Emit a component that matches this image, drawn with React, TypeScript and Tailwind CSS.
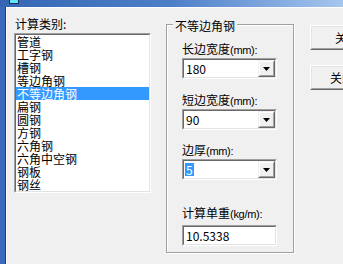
import React from "react";

function Sunken({ className = "", children }: { className?: string; children?: React.ReactNode }) {
  return (
    <div className={`border border-t-[#a0a0a0] border-l-[#a0a0a0] border-b-white border-r-white ${className}`}>
      <div className="h-full border border-t-[#696969] border-l-[#696969] border-b-[#e3e3e3] border-r-[#e3e3e3] bg-white overflow-hidden">
        {children}
      </div>
    </div>
  );
}

function DropBtn() {
  return (
    <div className="w-[17px] h-full border border-t-[#f0f0f0] border-l-[#f0f0f0] border-b-[#696969] border-r-[#696969]">
      <div className="h-full border border-t-white border-l-white border-b-[#a0a0a0] border-r-[#a0a0a0] bg-[#f0f0f0] flex items-center justify-center">
        <svg width="7" height="4" viewBox="0 0 7 4">
          <polygon points="0,0 7,0 3.5,4" fill="#000" />
        </svg>
      </div>
    </div>
  );
}

function Combo({ value, selected = false }: { value: string; selected?: boolean }) {
  return (
    <Sunken className="w-[95px] h-[21px] mt-px">
      <div className="flex h-full">
        <div className="flex-1 flex items-center pl-[1px]">
          <span className={selected ? "bg-[#3399ff] text-white leading-[13px] px-px" : "leading-[13px] px-px"}>{value}</span>
        </div>
        <DropBtn />
      </div>
    </Sunken>
  );
}

function Btn({ label, pl }: { label: string; pl: string }) {
  return (
    <div className="w-[75px] h-[25px] border border-t-white border-l-white border-b-[#696969] border-r-[#696969]">
      <div className={`h-full border border-t-[#e3e3e3] border-l-[#e3e3e3] border-b-[#a0a0a0] border-r-[#a0a0a0] flex items-center ${pl}`}>
        <span className="leading-[13px] whitespace-nowrap">{label}</span>
      </div>
    </div>
  );
}

function Label({ cjk, unit, className = "" }: { cjk: string; unit: string; className?: string }) {
  return (
    <div className={`leading-[13px] whitespace-nowrap ${className}`}>
      {cjk}
      <span className="font-['Liberation_Sans',sans-serif] text-[11px] tracking-[-0.3px]">{unit}</span>
    </div>
  );
}

const items = ["管道", "工字钢", "槽钢", "等边角钢", "不等边角钢", "扁钢", "圆钢", "方钢", "六角钢", "六角中空钢", "钢板", "钢丝"];

export default function App() {
  return (
    <div className="w-[343px] h-[264px] overflow-hidden bg-[#f0f0f0] flex flex-col text-[12px] text-black font-['Noto_Sans_CJK_SC','Liberation_Sans',sans-serif]">
      <div className="h-[7px] shrink-0 bg-gradient-to-r from-[#3566b4] via-[#4d7fc8] to-[#a6c6ee] flex">
        <div className="ml-[9px] w-[10px] h-[4px] bg-[#5fe6f4] border-l border-r border-b border-[#1c2f5c]" />
      </div>
      <div className="flex flex-1 min-h-0">
        <div className="w-[5px] bg-[#3b6bbd] shrink-0" />
        <div className="w-px bg-[#1f3c74] shrink-0" />
        <div className="flex-1 min-w-0 border-l border-t border-white flex pl-[7px]">
          <div className="w-[137px] shrink-0 flex flex-col">
            <div className="mt-[9px] ml-px leading-[13px]">计算类别:</div>
            <Sunken className="w-[137px] h-[160px] mt-[3px]">
              <div className="flex flex-col">
                {items.map((it) => (
                  <div
                    key={it}
                    className={`h-[13px] leading-[13px] pl-px whitespace-nowrap ${it === "不等边角钢" ? "bg-[#3399ff] text-white" : ""}`}
                  >
                    {it}
                  </div>
                ))}
              </div>
            </Sunken>
          </div>
          <div className="ml-[15px] mt-[16px] shrink-0">
            <div className="relative w-[128px] h-[229px] border border-[#a0a0a0] shadow-[inset_1px_1px_0_#fff,1px_1px_0_#fff] pl-[15px] pt-[17px] flex flex-col">
              <div className="absolute left-[6px] top-[-6px] px-[2px] bg-[#f0f0f0] leading-[13px]">不等边角钢</div>
              <Label cjk="长边宽度" unit="(mm):" />
              <Combo value="180" />
              <Label cjk="短边宽度" unit="(mm):" className="mt-[14px]" />
              <Combo value="90" />
              <Label cjk="边厚" unit="(mm):" className="mt-[13px]" />
              <Combo value="5" selected />
              <Label cjk="计算单重" unit="(kg/m):" className="mt-[26px]" />
              <Sunken className="w-[95px] h-[21px] mt-[4px]">
                <div className="h-full flex items-center pl-[2px] leading-[13px]">10.5338</div>
              </Sunken>
            </div>
          </div>
          <div className="ml-[16px] mt-[17px] shrink-0 flex flex-col gap-[15px]">
            <Btn label="关于" pl="pl-[23px]" />
            <Btn label="关闭" pl="pl-[18px]" />
          </div>
        </div>
      </div>
    </div>
  );
}
